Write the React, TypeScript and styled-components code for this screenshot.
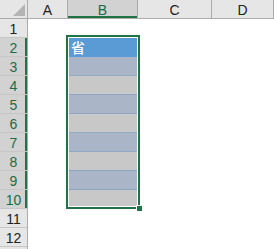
import styled, { createGlobalStyle } from "styled-components";

const GlobalStyle = createGlobalStyle`
  html, body {
    margin: 0;
    padding: 0;
    background: #ffffff;
  }
`;

type Fill = "active" | "blue" | "gray" | "none";

const COLS = ["A", "B", "C", "D"];
const ROWS = [1, 2, 3, 4, 5, 6, 7, 8, 9, 10, 11, 12, 13];
const SELECTED_COL = "B";
const FIRST_ROW = 2;
const LAST_ROW = 10;
const LAST_LABELLED_ROW = 12;

const fillFor = (row: number): Fill => {
  if (row === FIRST_ROW) return "active";
  if (row > FIRST_ROW && row <= LAST_ROW) return row % 2 === 1 ? "blue" : "gray";
  return "none";
};

const fillColors: Record<Fill, string> = {
  active: "#5b9bd5",
  blue: "#aab6c7",
  gray: "#c8c8c8",
  none: "#ffffff",
};

const Sheet = styled.div`
  position: relative;
  display: grid;
  grid-template-columns: 28px 40px 70px 74px 1fr;
  grid-auto-rows: 19px;
  width: 274px;
  height: 249px;
  overflow: hidden;
  font-family: "Liberation Sans", Arial, sans-serif;
  font-size: 14px;
  background: #ffffff;
`;

const Corner = styled.div`
  position: relative;
  box-sizing: border-box;
  background: #e6e6e6;
  border-right: 1px solid #ababab;
  border-bottom: 1px solid #ababab;

  svg {
    position: absolute;
    right: 2px;
    bottom: 2px;
  }
`;

const ColHead = styled.div<{ $selected?: boolean }>`
  box-sizing: border-box;
  display: flex;
  align-items: center;
  justify-content: center;
  background: ${(p) => (p.$selected ? "#d2d2d2" : "#e6e6e6")};
  color: ${(p) => (p.$selected ? "#1b6b45" : "#222222")};
  border-right: 1px solid #ababab;
  border-bottom: 1px solid #ababab;
  box-shadow: ${(p) => (p.$selected ? "inset 0 -2px 0 #217346" : "none")};
  padding-top: 1px;
`;

const RowHead = styled.div<{ $selected?: boolean }>`
  box-sizing: border-box;
  display: flex;
  align-items: center;
  justify-content: center;
  background: ${(p) => (p.$selected ? "#d2d2d2" : "#e6e6e6")};
  color: ${(p) => (p.$selected ? "#1b6b45" : "#222222")};
  border-right: 1px solid #ababab;
  border-bottom: 1px solid #c6c6c6;
  box-shadow: ${(p) => (p.$selected ? "inset -2px 0 0 #217346" : "none")};
  padding-top: 1px;
`;

const Cell = styled.div<{ $fill: Fill }>`
  box-sizing: border-box;
  display: flex;
  align-items: center;
  padding-left: 3px;
  background: ${(p) => fillColors[p.$fill]};
  border-bottom: 1px solid
    ${(p) => (p.$fill === "blue" || p.$fill === "gray" ? "#8ea8c6" : fillColors[p.$fill])};
  color: #ffffff;
  font-family: "Noto Sans CJK SC", "Liberation Sans", sans-serif;
  font-size: 14px;
  font-weight: 500;
`;

const Selection = styled.div`
  position: absolute;
  left: 66px;
  top: 35px;
  width: 74px;
  height: 174px;
  box-sizing: border-box;
  border: 2px solid #217346;
  box-shadow: inset 0 0 0 1px #ffffff;
  pointer-events: none;
`;

const FillHandle = styled.div`
  position: absolute;
  left: 136px;
  top: 205px;
  width: 6px;
  height: 6px;
  box-sizing: border-box;
  background: #217346;
  border-left: 1px solid #ffffff;
  border-top: 1px solid #ffffff;
`;

export default function App() {
  return (
    <>
      <GlobalStyle />
      <Sheet>
        <Corner>
          <svg width="12" height="12" viewBox="0 0 12 12">
            <polygon points="12,0 12,12 0,12" fill="#b4b4b4" />
          </svg>
        </Corner>
        {COLS.map((c) => (
          <ColHead key={c} $selected={c === SELECTED_COL}>
            {c}
          </ColHead>
        ))}
        {ROWS.map((r) => {
          const selected = r >= FIRST_ROW && r <= LAST_ROW;
          return [
            <RowHead key={`h${r}`} $selected={selected}>
              {r <= LAST_LABELLED_ROW ? r : null}
            </RowHead>,
            ...COLS.map((c) => (
              <Cell key={`${c}${r}`} $fill={c === SELECTED_COL ? fillFor(r) : "none"}>
                {c === SELECTED_COL && r === FIRST_ROW ? "省" : null}
              </Cell>
            )),
          ];
        })}
        <Selection />
        <FillHandle />
      </Sheet>
    </>
  );
}
